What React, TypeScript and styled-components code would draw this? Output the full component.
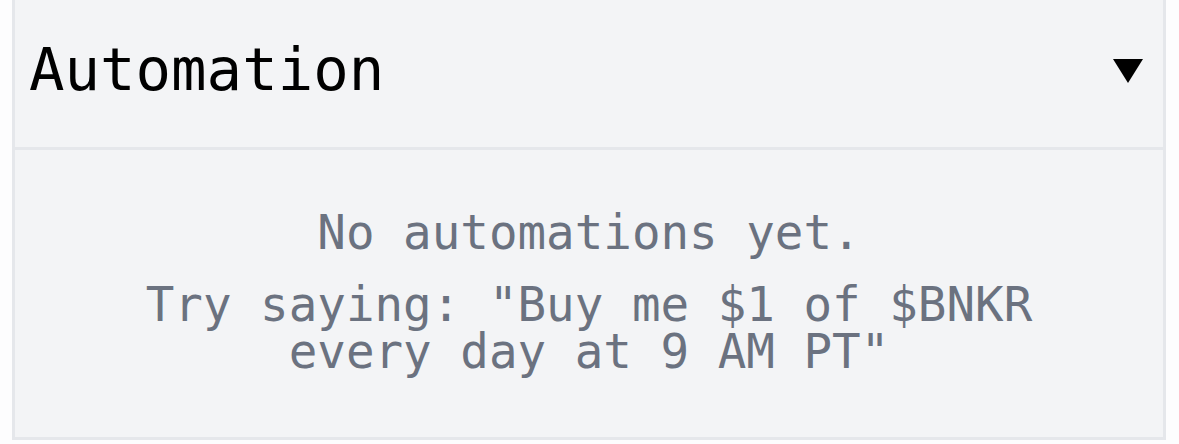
import styled, { createGlobalStyle } from 'styled-components';

const GlobalStyle = createGlobalStyle`
  html, body {
    margin: 0;
    padding: 0;
    background: #fdfdfe;
  }
  * {
    box-sizing: border-box;
  }
`;

const Page = styled.div`
  padding: 0 13px 0 12px;
  height: 444px;
  overflow: hidden;
`;

const Panel = styled.section`
  background: #f3f4f6;
  border: 3px solid #e5e7eb;
  border-top: 0;
  font-family: 'DejaVu Sans Mono', 'Liberation Mono', monospace;
`;

const Header = styled.div`
  display: flex;
  align-items: center;
  justify-content: space-between;
  padding: 40px 20px 48px 14px;
  border-bottom: 3px solid #e5e7eb;
`;

const Title = styled.h2`
  margin: 0;
  font-size: 59px;
  line-height: 59px;
  font-weight: 400;
  color: #000;
`;

const Caret = styled.svg`
  width: 30px;
  height: 24px;
  margin-top: 2px;
`;

const Body = styled.div`
  padding: 59px 48px 62px;
  text-align: center;
  color: #6b7280;
  font-size: 47.5px;
  line-height: 47px;
`;

const Line = styled.p<{ gap?: number }>`
  margin: ${(p) => p.gap ?? 0}px 0 0;
`;

export default function App() {
  return (
    <>
      <GlobalStyle />
      <Page>
        <Panel>
          <Header>
            <Title>Automation</Title>
            <Caret viewBox="0 0 30 24">
              <polygon points="0,0 30,0 15,24" fill="#000" />
            </Caret>
          </Header>
          <Body>
            <Line>No automations yet.</Line>
            <Line gap={25}>Try saying: "Buy me $1 of $BNKR every day at 9 AM PT"</Line>
          </Body>
        </Panel>
      </Page>
    </>
  );
}
